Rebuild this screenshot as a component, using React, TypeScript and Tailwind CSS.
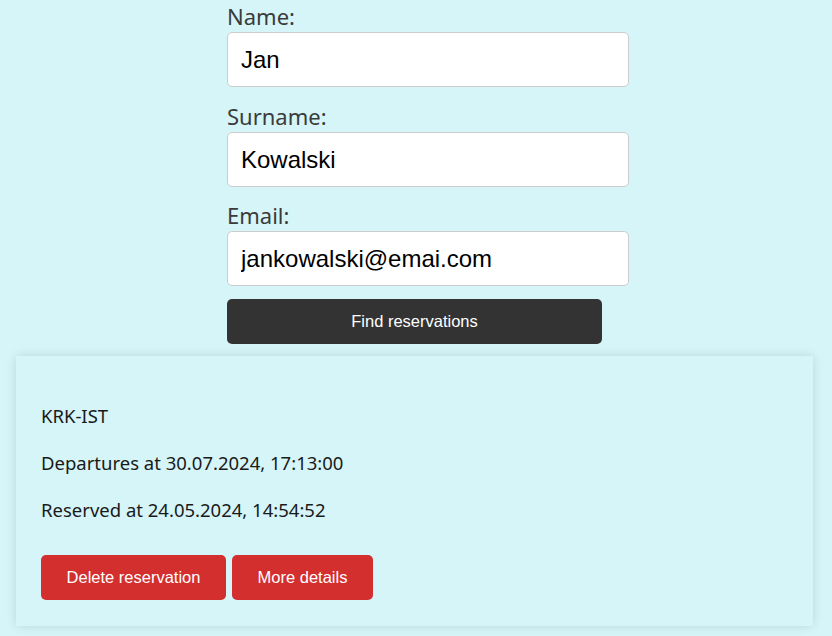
import { useState } from 'react';

type Field = {
  label: string;
  value: string;
};

const sans = "font-['Noto_Sans','Open_Sans',sans-serif]";
const arial = "font-['Liberation_Sans',Arial,sans-serif]";

export default function App() {
  const [fields, setFields] = useState<Field[]>([
    { label: 'Name:', value: 'Jan' },
    { label: 'Surname:', value: 'Kowalski' },
    { label: 'Email:', value: 'jankowalski@emai.com' },
  ]);

  function handleChange(index: number, value: string) {
    setFields((state) => state.map((f, i) => (i === index ? { ...f, value } : f)));
  }

  return (
    <div className="min-h-screen bg-[#d5f5f8] pb-4">
      {/* Search form */}
      <form className="ml-[227px] flex w-[402px] flex-col" onSubmit={(e) => e.preventDefault()}>
        {fields.map((field, i) => (
          <div
            key={field.label}
            className={i === 0 ? 'flex flex-col' : i === 1 ? 'mt-[13px] flex flex-col' : 'mt-[12px] flex flex-col'}
          >
            <label className={`${sans} text-[22px] leading-[32px] text-[#3b3b3b]`}>{field.label}</label>
            <input
              type="text"
              value={field.value}
              onChange={(e) => handleChange(i, e.target.value)}
              className={`${arial} h-[55px] w-full rounded-[5px] border border-[#cccccc] bg-white px-[13px] text-[24px] text-black outline-none`}
            />
          </div>
        ))}
        <button
          type="submit"
          className={`${arial} mt-[13px] h-[45px] w-[375px] rounded-[5px] bg-[#333333] text-[16.5px] text-white`}
        >
          Find reservations
        </button>
      </form>

      {/* Reservation card */}
      <div className="ml-4 mt-3 w-[797px] bg-[#d5f5f8] px-[25px] pt-[46px] pb-[26px] shadow-[0_0_10px_rgba(0,0,0,0.12)]">
        <div className={`${sans} flex flex-col gap-5 text-[18.5px] leading-[27px] text-[#1a1a1a]`}>
          <p>KRK-IST</p>
          <p>Departures at 30.07.2024, 17:13:00</p>
          <p>Reserved at 24.05.2024, 14:54:52</p>
        </div>
        <div className="mt-8 flex gap-[6px]">
          <button className={`${arial} h-[45px] w-[185px] rounded-[5px] bg-[#d32f2f] text-[16.5px] text-white`}>
            Delete reservation
          </button>
          <button className={`${arial} h-[45px] w-[141px] rounded-[5px] bg-[#d32f2f] text-[16.5px] text-white`}>
            More details
          </button>
        </div>
      </div>
    </div>
  );
}
